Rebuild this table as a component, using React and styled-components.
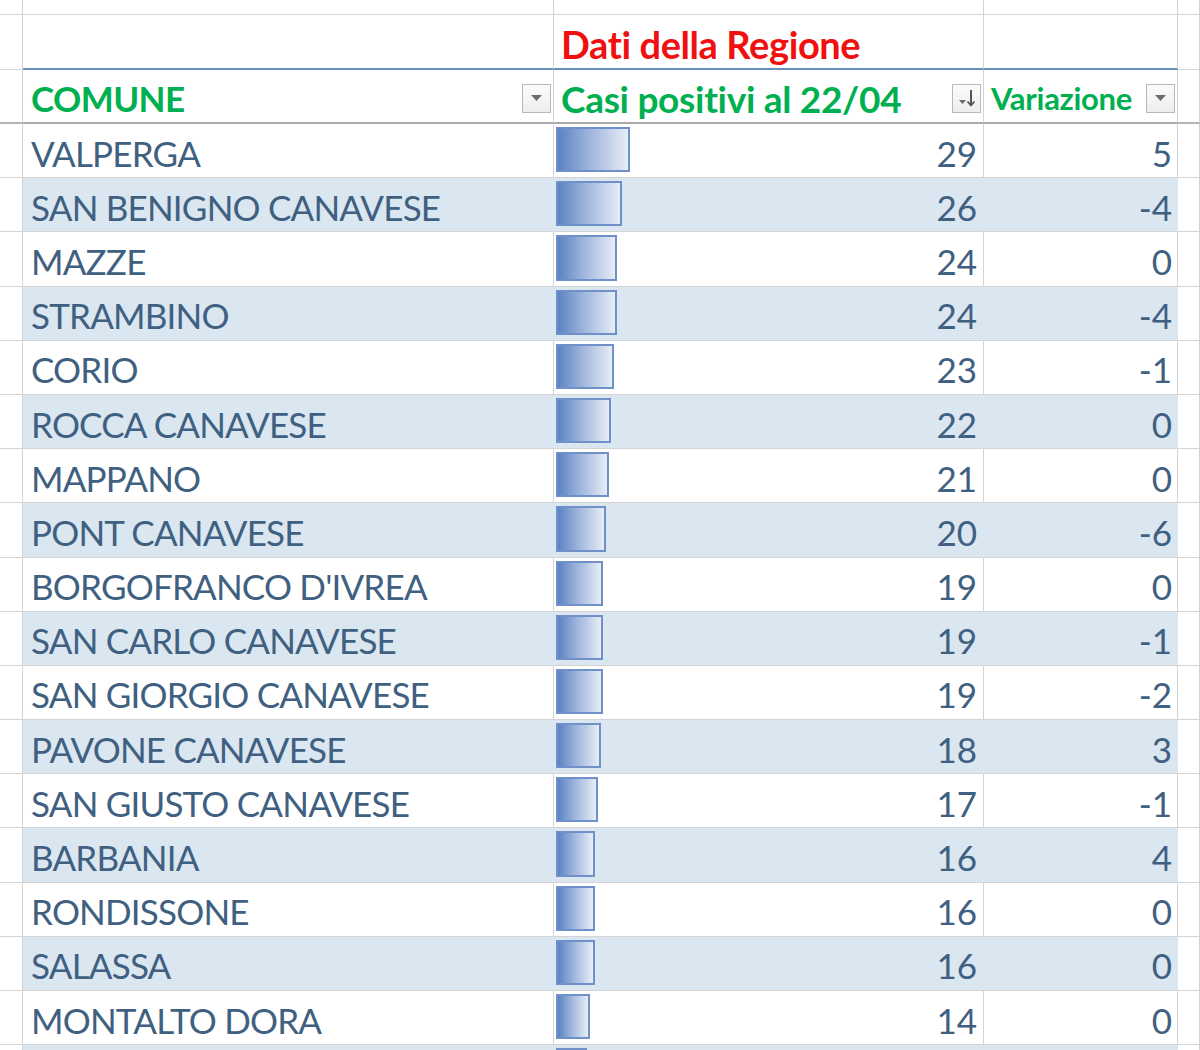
import React from "react";
import styled, { createGlobalStyle } from "styled-components";

const GlobalStyle = createGlobalStyle`
  html, body {
    margin: 0;
    padding: 0;
    background: #ffffff;
    overflow: hidden;
  }
  body {
    font-family: "Lato", "Open Sans", sans-serif;
  }
`;

// Styles
const Sheet = styled.div`
  width: 1200px;
  height: 1050px;
  overflow: hidden;
  background: #ffffff;
`;

const Row = styled.div`
  display: grid;
  grid-template-columns: 23px 531px 430px 194px 1fr;
  height: ${(p) => p.$h}px;
`;

const Cell = styled.div`
  box-sizing: border-box;
  border-right: 1px solid ${(p) => (p.$band ? "#dae6f0" : "#d4d4d4")};
  border-bottom: ${(p) => p.$bottom || "1px solid #d4d4d4"};
  background: ${(p) => (p.$band ? "#dae6f0" : "transparent")};
  display: flex;
  align-items: ${(p) => p.$align || "center"};
  justify-content: ${(p) => (p.$right ? "flex-end" : "flex-start")};
  padding: ${(p) => p.$pad || "0"};
  min-width: 0;
  overflow: hidden;
  white-space: nowrap;
`;

const Title = styled.span`
  color: #f01010;
  font-weight: 700;
  font-size: 38px;
  letter-spacing: -0.4px;
  line-height: 1;
  padding-top: 4px;
`;

const HeadText = styled.span`
  color: #00b050;
  font-weight: 700;
  font-size: ${(p) => p.$size || 35}px;
  letter-spacing: ${(p) => p.$ls || "-0.6px"};
  line-height: 1;
  flex: 1;
`;

const Text = styled.span`
  color: #3f6080;
  font-size: 35px;
  letter-spacing: -0.8px;
  line-height: 1;
`;

const Num = styled(Text)`
  letter-spacing: 0;
`;

const FilterBtn = styled.div`
  box-sizing: border-box;
  width: 29px;
  height: 29px;
  border: 1px solid #b9b9b9;
  background: linear-gradient(#fbfbfb, #eeeeee);
  display: flex;
  align-items: center;
  justify-content: center;
  flex: none;
`;

const BarCell = styled.div`
  position: relative;
  flex: 1;
  height: 100%;
  display: flex;
  align-items: center;
  justify-content: flex-end;
  padding-right: 6px;
`;

const Bar = styled.div`
  position: absolute;
  left: 2px;
  top: 3px;
  bottom: 5px;
  box-sizing: border-box;
  border: 2px solid #6f90c8;
  background: linear-gradient(90deg, #5b83c2 0%, #9fb5dc 45%, #e6edf6 100%);
`;

// Icons
const Caret = () => (
  <svg width="13" height="8" viewBox="0 0 13 8">
    <path d="M1 1 L12 1 L6.5 7 Z" fill="#6b6b6b" />
  </svg>
);

const SortIcon = () => (
  <svg width="22" height="22" viewBox="0 0 22 22">
    <path d="M3 13 L10 13 L6.5 17 Z" fill="#6b6b6b" />
    <path d="M15 3 L15 18" stroke="#555" strokeWidth="2" />
    <path d="M11.5 14.5 L15 18.5 L18.5 14.5" stroke="#555" strokeWidth="1.8" fill="none" />
  </svg>
);

// Data
const rows = [
  ["VALPERGA", 29, 5],
  ["SAN BENIGNO CANAVESE", 26, -4],
  ["MAZZE", 24, 0],
  ["STRAMBINO", 24, -4],
  ["CORIO", 23, -1],
  ["ROCCA CANAVESE", 22, 0],
  ["MAPPANO", 21, 0],
  ["PONT CANAVESE", 20, -6],
  ["BORGOFRANCO D'IVREA", 19, 0],
  ["SAN CARLO CANAVESE", 19, -1],
  ["SAN GIORGIO CANAVESE", 19, -2],
  ["PAVONE CANAVESE", 18, 3],
  ["SAN GIUSTO CANAVESE", 17, -1],
  ["BARBANIA", 16, 4],
  ["RONDISSONE", 16, 0],
  ["SALASSA", 16, 0],
  ["MONTALTO DORA", 14, 0],
];

// partial row cut by the bottom edge: only its bar top shows
const nextBar = 13;

const barWidth = (v) => Math.round(v * 2.67 - 3.3);

export default function App() {
  return (
    <Sheet>
      <GlobalStyle />
      <Row $h={15}>
        <Cell />
        <Cell />
        <Cell />
        <Cell />
        <Cell />
      </Row>
      <Row $h={55}>
        <Cell />
        <Cell $bottom="2px solid #6a8fbe" />
        <Cell $bottom="2px solid #6a8fbe" $pad="0 0 0 7px" $align="center">
          <Title>Dati della Regione</Title>
        </Cell>
        <Cell $bottom="2px solid #6a8fbe" />
        <Cell />
      </Row>
      <Row $h={54}>
        <Cell $bottom="2px solid #b5b5b5" />
        <Cell $bottom="2px solid #a9a9a9" $pad="4px 2px 0 8px">
          <HeadText>COMUNE</HeadText>
          <FilterBtn>
            <Caret />
          </FilterBtn>
        </Cell>
        <Cell $bottom="2px solid #a9a9a9" $pad="4px 2px 0 7px">
          <HeadText $size={37} $ls="-0.3px">
            Casi positivi al 22/04
          </HeadText>
          <FilterBtn>
            <SortIcon />
          </FilterBtn>
        </Cell>
        <Cell $bottom="2px solid #a9a9a9" $pad="4px 2px 0 7px">
          <HeadText $size={31} $ls="-0.3px">
            Variazione
          </HeadText>
          <FilterBtn>
            <Caret />
          </FilterBtn>
        </Cell>
        <Cell $bottom="2px solid #b5b5b5" />
      </Row>
      {rows.map(([name, cases, delta], i) => {
        const band = i % 2 === 1;
        return (
          <Row $h={54.2} key={i}>
            <Cell />
            <Cell $band={band} $pad="5px 0 0 8px">
              <Text>{name}</Text>
            </Cell>
            <Cell $band={band}>
              <BarCell>
                <Bar style={{ width: barWidth(cases) }} />
                <Num style={{ paddingTop: 5 }}>{cases}</Num>
              </BarCell>
            </Cell>
            <Cell $band={band} $right $pad="5px 5px 0 0">
              <Num>{delta}</Num>
            </Cell>
            <Cell />
          </Row>
        );
      })}
      <Row $h={54}>
        <Cell />
        <Cell $band />
        <Cell $band>
          <BarCell>
            <Bar style={{ width: barWidth(nextBar) }} />
          </BarCell>
        </Cell>
        <Cell $band />
        <Cell />
      </Row>
    </Sheet>
  );
}
